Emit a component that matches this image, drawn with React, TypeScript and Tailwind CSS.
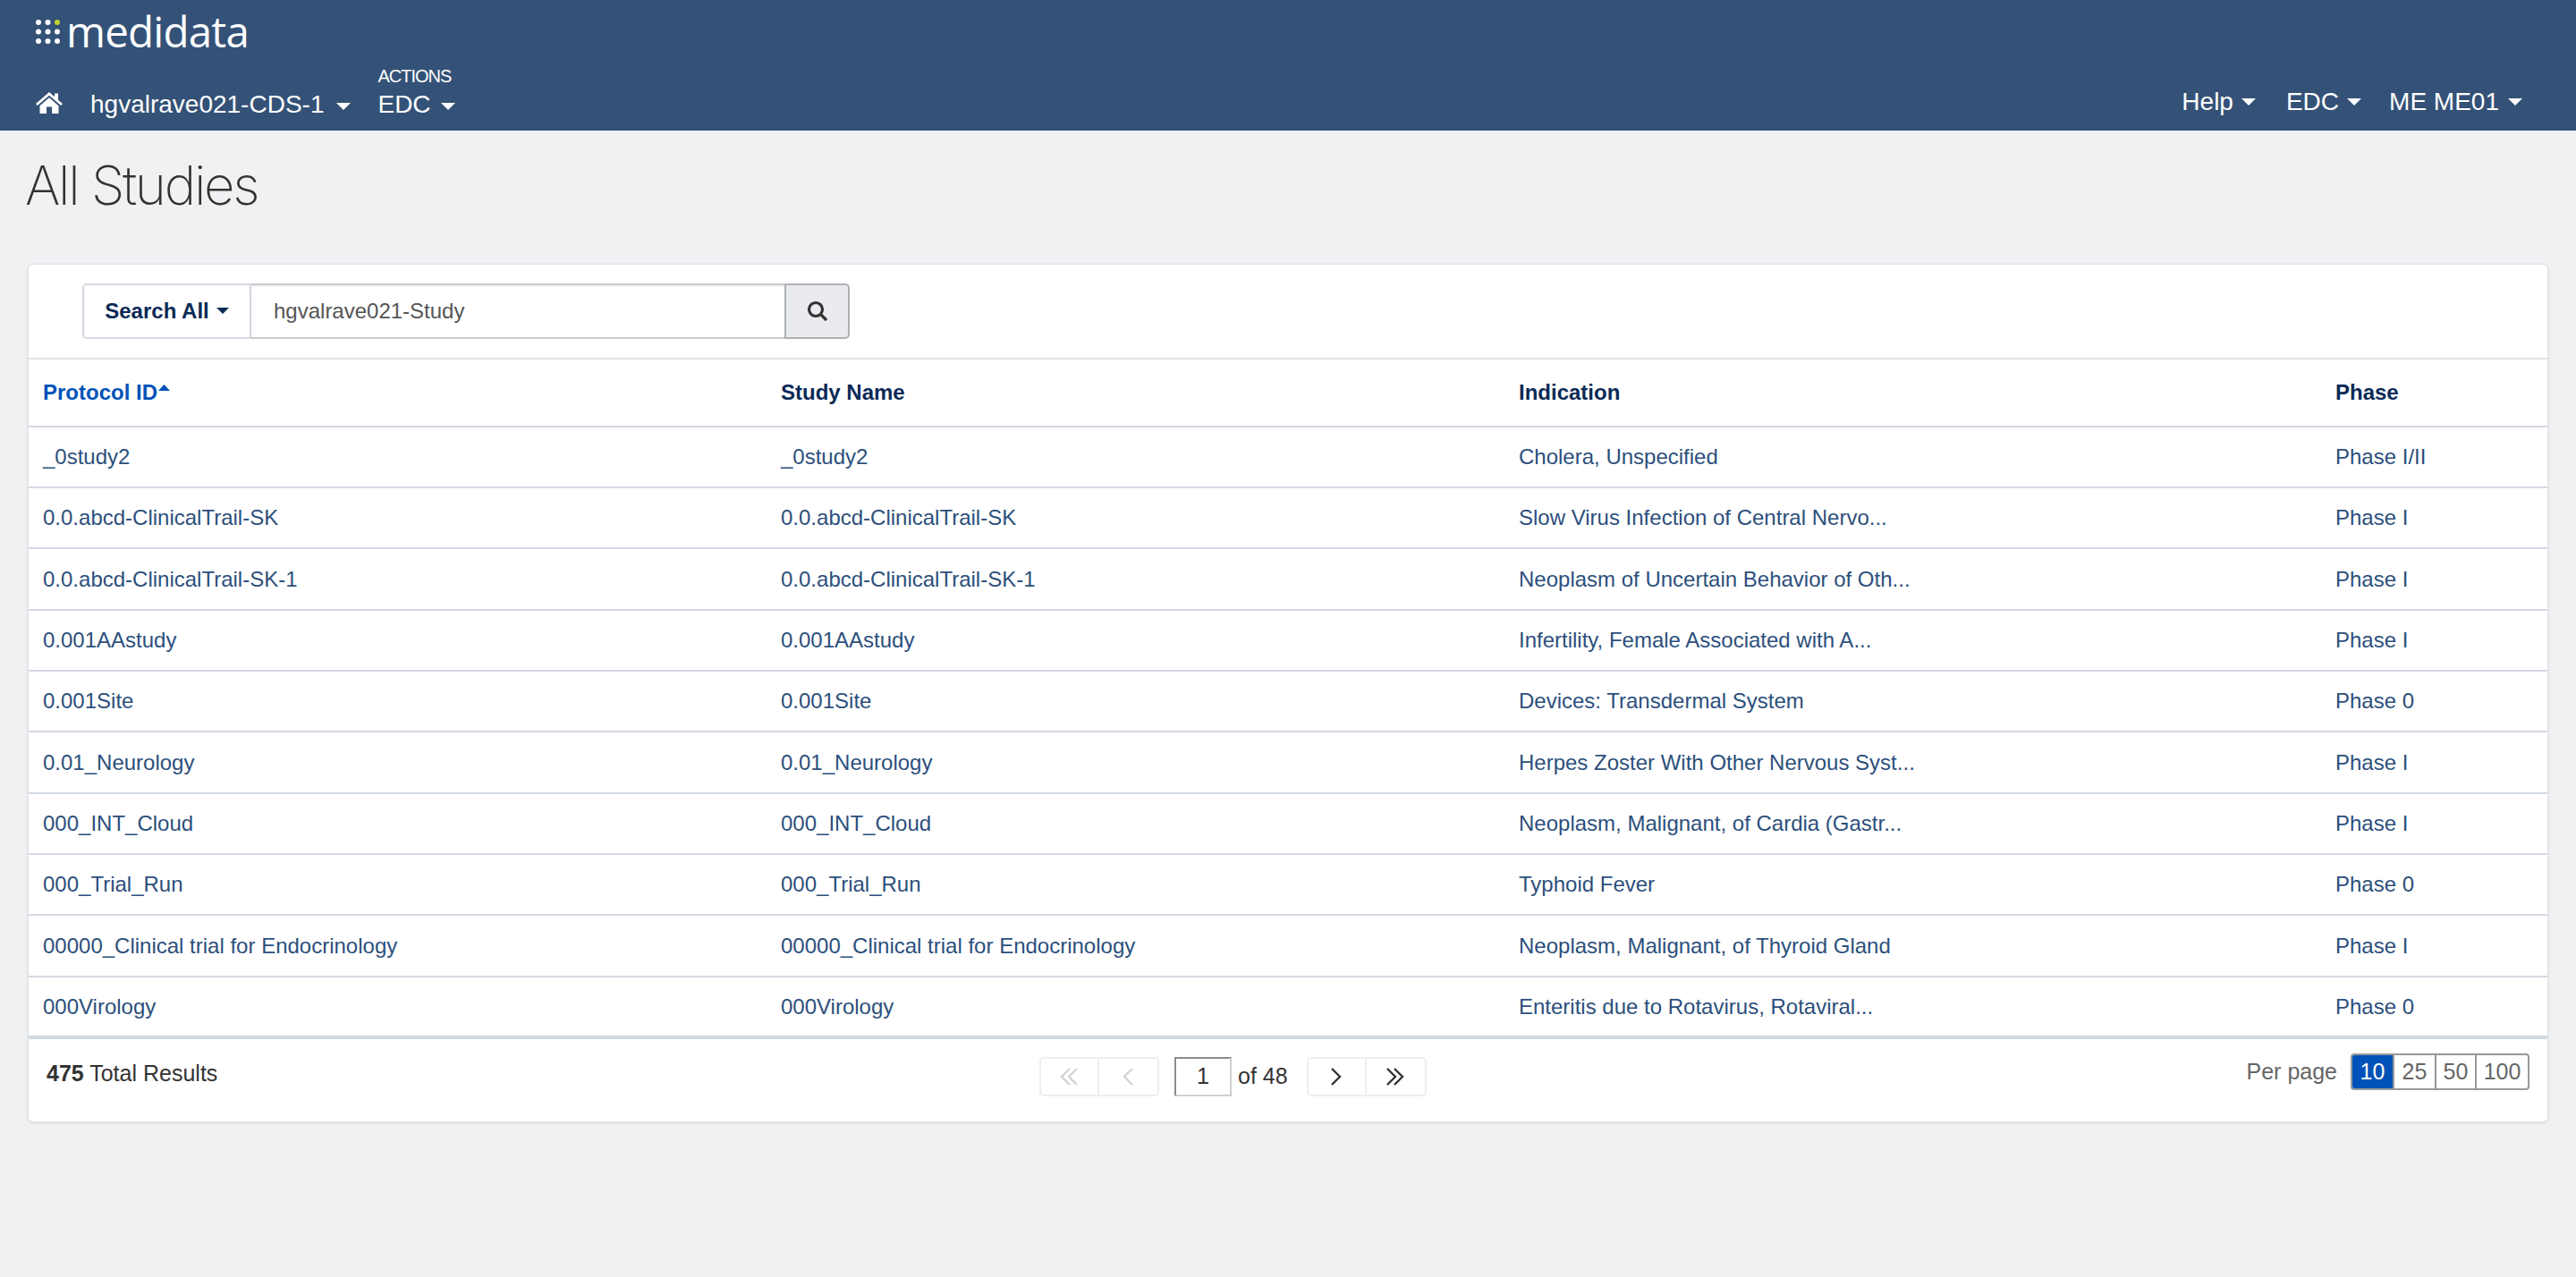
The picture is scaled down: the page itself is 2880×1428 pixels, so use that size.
import React from "react";

const rows = [
  ["_0study2", "Cholera, Unspecified", "Phase I/II"],
  ["0.0.abcd-ClinicalTrail-SK", "Slow Virus Infection of Central Nervo...", "Phase I"],
  ["0.0.abcd-ClinicalTrail-SK-1", "Neoplasm of Uncertain Behavior of Oth...", "Phase I"],
  ["0.001AAstudy", "Infertility, Female Associated with A...", "Phase I"],
  ["0.001Site", "Devices: Transdermal System", "Phase 0"],
  ["0.01_Neurology", "Herpes Zoster With Other Nervous Syst...", "Phase I"],
  ["000_INT_Cloud", "Neoplasm, Malignant, of Cardia (Gastr...", "Phase I"],
  ["000_Trial_Run", "Typhoid Fever", "Phase 0"],
  ["00000_Clinical trial for Endocrinology", "Neoplasm, Malignant, of Thyroid Gland", "Phase I"],
  ["000Virology", "Enteritis due to Rotavirus, Rotaviral...", "Phase 0"],
];

function Caret({ cls = "" }: { cls?: string }) {
  return (
    <svg width="16" height="8" viewBox="0 0 16 8" className={cls}>
      <path d="M0 0H16L8 8Z" fill="currentColor" />
    </svg>
  );
}

function Logo() {
  const dots: [number, number, string][] = [];
  for (let r = 0; r < 3; r++) for (let c = 0; c < 3; c++) dots.push([c, r, r === 0 && c === 2 ? "#c4d42e" : "#ffffff"]);
  return (
    <svg width="27" height="27" viewBox="0 0 27 27" className="mr-[7px] mt-[4px]">
      {dots.map(([c, r, f], i) => (
        <circle key={i} cx={3 + c * 10.5} cy={3 + r * 10.5} r={3} fill={f} />
      ))}
    </svg>
  );
}

function Home() {
  return (
    <svg width="30" height="24" viewBox="0 0 30 24" fill="#fff">
      <path d="M15 0 L21 5.2 V1.5 H25 V8.7 L30 13 L28.2 15 L15 3.8 L1.8 15 L0 13 Z" />
      <path d="M15 6.3 L25.5 15.2 V24 H18 V16.5 H12 V24 H4.5 V15.2 Z" />
    </svg>
  );
}

function Chevron({ dir, double, color }: { dir: "l" | "r"; double?: boolean; color: string }) {
  const p = (x: number) => (dir === "r" ? `M${x} 1 L${x + 9} 10 L${x} 19` : `M${x + 9} 1 L${x} 10 L${x + 9} 19`);
  return (
    <svg width="22" height="20" viewBox="0 0 22 20" fill="none" stroke={color} strokeWidth="2.4">
      {double ? (
        <>
          <path d={p(2)} />
          <path d={p(10)} />
        </>
      ) : (
        <path d={p(6)} />
      )}
    </svg>
  );
}

function PageBtn({ children, last }: { children: React.ReactNode; last?: boolean }) {
  return (
    <span className={`flex h-full w-[65px] items-center justify-center ${last ? "" : "border-r-2 border-[#eeeeee]"}`}>
      {children}
    </span>
  );
}

export default function App() {
  return (
    <div className="min-h-[1428px] bg-[#f0f1f3] font-['Liberation_Sans',sans-serif] text-[24px]">
      <header className="h-[146px] bg-[#345277] pl-[40px] pr-[60px] text-white">
        <div className="flex h-[66px] items-center">
          <Logo />
          <span className="mt-[3px] font-['Open_Sans',sans-serif] text-[47.5px] leading-none font-normal tracking-[-0.8px]">medidata</span>
        </div>
        <div className="flex h-[80px] justify-between">
          <div className="flex items-end pb-[13px] text-[28px] leading-[32px]">
            <span className="mb-[6px]"><Home /></span>
            <span className="ml-[31px]">hgvalrave021-CDS-1</span>
            <Caret cls="ml-[14px] mb-[10px]" />
            <div className="ml-[30px] flex flex-col">
              <span className="mb-[5px] text-[20px] leading-[22px] tracking-[-1px]">ACTIONS</span>
              <span className="flex items-end">
                EDC
                <Caret cls="ml-[11px] mb-[10px]" />
              </span>
            </div>
          </div>
          <div className="flex items-end pb-[16px] text-[28px] leading-[32px]">
            <span>Help</span>
            <Caret cls="ml-[9px] mb-[12px]" />
            <span className="ml-[34px]">EDC</span>
            <Caret cls="ml-[9px] mb-[12px]" />
            <span className="ml-[31px]">ME ME01</span>
            <Caret cls="ml-[10px] mb-[12px]" />
          </div>
        </div>
      </header>

      <h1 className="ml-[28px] mt-[28px] font-['Inter',sans-serif] text-[60px] leading-[66px] font-extralight tracking-[-2.3px] text-[#333333]">
        All Studies
      </h1>

      <section className="mx-[31px] mt-[55px] h-[960px] rounded-[6px] border border-[#e1e3e6] bg-white shadow-[0_1px_3px_rgba(0,0,0,0.12)]">
        <div className="flex h-[104px] items-center pb-[1px] pl-[60px]">
          <div className="flex h-[62px] w-[858px] rounded-[5px]">
            <span className="flex w-[189px] items-center justify-center gap-[8px] rounded-l-[5px] border-2 border-[#d3d9e2] font-bold text-[#0a2a56]">
              Search All
              <Caret cls="h-[7px] w-[14px]" />
            </span>
            <span className="flex flex-1 items-center border-y-2 border-[#c9cbcf] pl-[25px] text-[#555555] shadow-[inset_0_2px_2px_rgba(0,0,0,0.06)]">
              hgvalrave021-Study
            </span>
            <span className="flex w-[73px] items-center justify-center rounded-r-[5px] border-2 border-[#adb0b5] bg-[#e9ebef]">
              <svg width="24" height="24" viewBox="0 0 24 24" fill="none" stroke="#333" strokeWidth="3.2">
                <circle cx="10" cy="10" r="7.5" />
                <path d="M15.5 15.5 L22 22" />
              </svg>
            </span>
          </div>
        </div>

        <table className="w-full table-fixed border-collapse">
          <colgroup>
            <col className="w-[825px]" />
            <col className="w-[825px]" />
            <col className="w-[913px]" />
            <col />
          </colgroup>
          <thead>
            <tr className="h-[76px] border-y-2 border-y-[#d3d9e2] border-t-[#dfe1e4] text-left font-bold text-[#0a2a56]">
              <th className="pl-[16px]">
                <span className="inline-flex items-start text-[#0152b8]">
                  Protocol ID
                  <svg width="13" height="7" viewBox="0 0 13 7" className="ml-[1px] mt-[9px]"><path d="M0 7 L6.5 0 L13 7Z" fill="currentColor" /></svg>
                </span>
              </th>
              <th className="pl-[16px]">Study Name</th>
              <th className="pl-[16px]">Indication</th>
              <th className="pl-[16px]">Phase</th>
            </tr>
          </thead>
          <tbody className="text-[#2c4f7c]">
            {rows.map((r, i) => (
              <tr
                key={i}
                className={`${i === 2 || i === 5 || i === 8 ? "h-[69px]" : "h-[68px]"} ${i === rows.length - 1 ? "border-b-4" : "border-b-2"} border-[#d3d9e2]`}
              >
                <td className="pl-[16px]">{r[0]}</td>
                <td className="pl-[16px]">{r[0]}</td>
                <td className="pl-[16px]">{r[1]}</td>
                <td className="pl-[16px]">{r[2]}</td>
              </tr>
            ))}
          </tbody>
        </table>

        <div className="relative flex h-[90px] items-start justify-between pl-[20px] pr-[20px]">
          <div className="mt-[22px] text-[25px] leading-[32px] text-[#333333]">
            <b>475</b> Total Results
          </div>
          <div className="absolute left-[1130px] top-[20px] flex h-[44px] items-center">
            <div className="flex h-full items-center rounded-[5px] border-2 border-[#eeeeee]">
              <PageBtn><Chevron dir="l" double color="#d2d2d2" /></PageBtn>
              <PageBtn last><Chevron dir="l" color="#d2d2d2" /></PageBtn>
            </div>
            <span className="ml-[17px] flex h-full w-[64px] items-center justify-center border-2 border-[#d0d0d0] border-t-[#8c8c8c] border-l-[#8c8c8c] text-[25px] text-[#333333]">1</span>
            <span className="ml-[7px] text-[25px] text-[#333333]">of 48</span>
            <div className="ml-[21px] flex h-full items-center rounded-[5px] border-2 border-[#eeeeee]">
              <PageBtn><Chevron dir="r" color="#333333" /></PageBtn>
              <PageBtn last><Chevron dir="r" double color="#333333" /></PageBtn>
            </div>
          </div>
          <div className="mt-[16px] flex items-center text-[#666666]">
            <span className="mr-[15px] text-[25px]">Per page</span>
            <div className="flex h-[41px] w-[200px] overflow-hidden rounded-[4px] border-2 border-[#999999] text-center text-[25px] leading-[37px]">
              <span className="w-[45px] bg-[#0152b8] text-white">10</span>
              <span className="w-[47px] border-l-2 border-[#999999]">25</span>
              <span className="w-[45px] border-l-2 border-[#999999]">50</span>
              <span className="flex-1 border-l-2 border-[#999999]">100</span>
            </div>
          </div>
        </div>
      </section>
    </div>
  );
}
